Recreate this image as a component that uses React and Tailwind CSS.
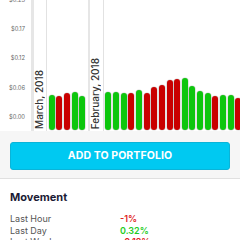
import React from "react";

const G = "g";
const R = "r";
const march = [
  [35, G],
  [34, R],
  [37, R],
  [38, G],
  [34, G],
];
const feb = [
  [38, G],
  [38, G],
  [37, G],
  [37, R],
  [40, G],
  [37, R],
  [43, R],
  [45, R],
  [50, R],
  [51, R],
  [52, G],
  [44, G],
  [39, G],
  [37, G],
  [34, R],
  [35, G],
  [35, G],
  [32, R],
];

function Bar({ h, c }) {
  return (
    <div className="w-[7.67px] shrink-0 flex justify-center items-end">
      <div
        className={
          "w-[6px] rounded-full shadow-[0_0_0_0.6px_rgba(0,0,0,0.18)] " +
          (c === G ? "bg-[#0dc60d]" : "bg-[#c90000]")
        }
        style={{ height: h }}
      />
    </div>
  );
}

function Month({ label, bars }) {
  return (
    <div className="flex shrink-0 h-full">
      <div className="w-[2.6px] h-full bg-[#e6e6e6]" />
      <div className="w-[13.4px] h-full border-r border-[#e2e2e2] flex flex-col justify-end items-center pb-[2px] pr-[2px]">
        <span className="[writing-mode:vertical-rl] rotate-180 text-[10px] leading-[10px] font-medium text-[#333] whitespace-nowrap">
          {label}
        </span>
      </div>
      <div className="flex items-end h-full pl-[0.8px] pr-[1.6px] pb-[1px]">
        {bars.map(([h, c], i) => (
          <Bar key={i} h={h} c={c} />
        ))}
      </div>
    </div>
  );
}

export default function App() {
  const yLabels = ["$0.23", "$0.17", "$0.12", "$0.06", "$0.00"];
  return (
    <div
      className="w-[240px] h-[240px] overflow-hidden bg-white flex flex-col"
      style={{ fontFamily: "Inter, 'Liberation Sans', sans-serif" }}
    >
      <div className="h-[131px] shrink-0 flex overflow-hidden bg-white">
        <div className="w-[31px] shrink-0 flex flex-col mt-[-14.65px]">
          {yLabels.map((l) => (
            <div
              key={l}
              className="h-[29.3px] shrink-0 flex items-center justify-end pr-[6px] text-[5.8px] text-[#666]"
            >
              {l}
            </div>
          ))}
        </div>
        <Month label="March, 2018" bars={march} />
        <Month label="February, 2018" bars={feb} />
      </div>
      <div className="h-[48px] shrink-0 bg-[#f6f6f6] border-b border-[#e0e0e0] px-[10px] pt-[11px]">
        <div className="h-[27.5px] rounded-[3px] bg-[#00c9f1] border border-[#0ab4d8] flex items-center justify-center text-white font-bold text-[10.5px] tracking-[0.1px]">
          ADD TO PORTFOLIO
        </div>
      </div>
      <div className="px-[10px] pt-[11px]">
        <div className="text-[11px] leading-[14px] font-bold text-[#1b1b35]">Movement</div>
        <div className="mt-[9px] flex flex-col text-[9px] leading-[11.7px]">
          <div className="flex">
            <span className="w-[110px] text-[#555]">Last Hour</span>
            <span className="font-semibold text-[#e02222]">-1%</span>
          </div>
          <div className="flex">
            <span className="w-[110px] text-[#555]">Last Day</span>
            <span className="font-semibold text-[#1fcc1f]">0.32%</span>
          </div>
          <div className="flex">
            <span className="w-[110px] text-[#555]">Last Week</span>
            <span className="font-semibold text-[#e02222]">-0.12%</span>
          </div>
        </div>
      </div>
    </div>
  );
}
